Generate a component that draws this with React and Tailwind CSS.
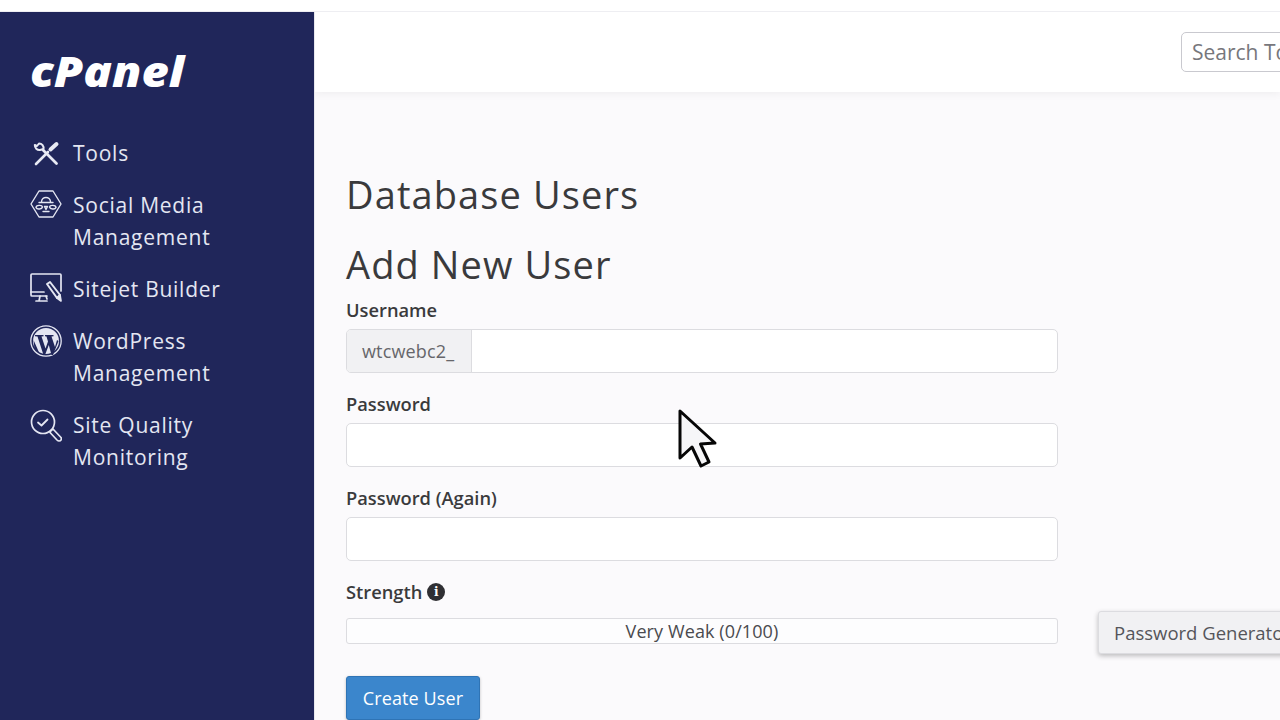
const ToolsIcon = () => (
  <svg width="30" height="30" viewBox="0 0 30 30" fill="none" stroke="#e8eaf4" strokeLinejoin="round" strokeLinecap="round">
    <path d="M6 27 L18 15" strokeWidth="2.600" />
    <path d="M20.500 12.500 L26.500 7" strokeWidth="4" />
    <path d="M13 13 L26.500 26.500" strokeWidth="2.800" />
    <path d="M9 6.500 L7 9 L4.800 8 C4.800 11 7 13.300 10 13 L13.500 12 C14 9 12 6.500 9 6.500 Z" strokeWidth="2" />
  </svg>
);

const SocialIcon = () => (
  <svg width="32" height="30" viewBox="0 0 32 30" fill="none" stroke="#e4e6f2" strokeWidth="1.400" strokeLinejoin="round" strokeLinecap="round">
    <path d="M9 2 H23 L31 15 L23 28 H9 L1 15 Z" />
    <path d="M11.500 13 C11.500 7 20.500 7 20.500 13" />
    <path d="M9 13.500 H23" />
    <path d="M6 18.500 C6 16 12 15.500 12.500 18 C12 20 7 21 6 18.500 Z" />
    <path d="M26 18.500 C26 16 20 15.500 19.500 18 C20 20 25 21 26 18.500 Z" />
    <path d="M14.500 17.500 H17.500 L16 20.500 Z" />
    <path d="M13 22.500 H19" />
  </svg>
);

const SitejetIcon = () => (
  <svg width="32" height="32" viewBox="0 0 32 32" fill="none" stroke="#e4e6f2" strokeWidth="1.700" strokeLinejoin="round" strokeLinecap="round">
    <path d="M17 23 H2 C1.400 23 1 22.600 1 22 V2 C1 1.400 1.400 1 2 1 H30 C30.600 1 31 1.400 31 2 V18" />
    <path d="M1 19 H14" />
    <path d="M10 23 L9 28 M16 23 L17 26 M6 28 H17" />
    <path d="M17 11 L20 9 L30 22 L27 25 Z" strokeWidth="2" />
    <path d="M27 25 L30 22 L31 28 Z" fill="#e4e6f2" />
  </svg>
);

const WordPressIcon = () => (
  <svg width="32" height="32" viewBox="0 0 32 32">
    <circle cx="16" cy="16" r="15.200" fill="none" stroke="#e4e6f2" strokeWidth="1.300" />
    <circle cx="16" cy="16" r="13" fill="#e4e6f2" />
    <path d="M5 10 H13.500 V11.300 L11.500 11.600 L15.500 23.500 L18 16.500 L16.500 11.600 L15 11.300 V10 H23.500 V11.300 L21.500 11.600 L25 22 L27 15 L28.500 16 L23 30 H21.500 L18.800 20 L15 30 H13.500 L7.500 11.600 L5 11.300 Z" fill="#20265a" />
    <path d="M3.500 15 L9.500 28.500 L11 29.500 L4.500 24 Z" fill="#20265a" />
  </svg>
);

const QualityIcon = () => (
  <svg width="32" height="34" viewBox="0 0 32 34" fill="none" stroke="#e4e6f2" strokeWidth="1.700" strokeLinejoin="round" strokeLinecap="round">
    <circle cx="13" cy="13" r="11.500" />
    <path d="M8 13.500 L11.500 16.500 L17.500 10.500" strokeWidth="1.800" />
    <path d="M21 21.500 L23 20 L31 28.500 C32 30 31 32 29 32 C28 32 27.500 31.500 27 31 L20 23.500 Z" />
  </svg>
);

const Cursor = () => (
  <svg width="42" height="62" viewBox="0 0 42 62" className="absolute left-[677px] top-[408px]">
    <path d="M3 3 L3 50 L15 39 L24 58 L32 54 L23.500 36 L38 35 Z" fill="#f6f6f8" stroke="#060606" strokeWidth="3" strokeLinejoin="round" />
  </svg>
);

const Item = ({ icon, children }) => (
  <a className="flex text-[21px] leading-[32px] text-[#e4e6f2] tracking-[0.75px] mb-[20px]">
    <span className="w-[32px] flex-none mr-[11px]">{icon}</span>
    <span>{children}</span>
  </a>
);

const Label = ({ children }) => (
  <label className="block text-[18.300px] leading-[26px] font-[550] text-[#3a3a3c] mb-[6px]">{children}</label>
);

export default function App() {
  return (
    <div className="relative w-[1280px] h-[720px] overflow-hidden flex flex-col bg-white font-['Open_Sans',sans-serif]">
      <div className="h-[12px] flex-none bg-white border-b border-[#eeeef2]" />
      <div className="flex flex-1 min-h-0">
        <aside className="w-[315px] flex-none bg-[#20265a] pl-[30px] border-r border-[#e8e8ee]">
          <div className="h-[125px] pt-[30px]">
            <span className="inline-block origin-left scale-x-[1.1] text-white italic font-extrabold text-[43px] leading-[58px]">cPanel</span>
          </div>
          <Item icon={<ToolsIcon />}>Tools</Item>
          <Item icon={<SocialIcon />}>Social Media<br />Management</Item>
          <Item icon={<SitejetIcon />}>Sitejet Builder</Item>
          <Item icon={<WordPressIcon />}>WordPress<br />Management</Item>
          <Item icon={<QualityIcon />}>Site Quality<br />Monitoring</Item>
        </aside>
        <main className="flex-1 min-w-0 bg-[#fbfafc] overflow-hidden">
          <header className="h-[80px] bg-white shadow-[0_2px_8px_rgba(0,0,0,0.05)] pt-[20px] pl-[866px]">
            <div className="w-[300px] h-[40px] border border-[#c9c9cf] rounded-[5px] bg-white pl-[10px] text-[21px] leading-[38px] text-[#77777c]">Search Tools</div>
          </header>
          <div className="pl-[31px]">
            <h1 className="mt-[78px] text-[38px] leading-[48px] font-normal tracking-[1.100px] text-[#3a3a3c]">Database Users</h1>
            <h2 className="mt-[22px] text-[38px] leading-[48px] font-normal tracking-[1.100px] text-[#3a3a3c] mb-[9px]">Add New User</h2>
            <div className="h-[94px]">
              <Label>Username</Label>
              <div className="flex w-[712px] h-[44px] border border-[#dcdce0] rounded-[5px] bg-white overflow-hidden">
                <span className="w-[125px] bg-[#f1f1f3] border-r border-[#dcdce0] pl-[15px] text-[18px] tracking-[0.15px] leading-[42px] text-[#66666a]">wtcwebc2_</span>
              </div>
            </div>
            <div className="h-[94px]">
              <Label>Password</Label>
              <div className="w-[712px] h-[44px] border border-[#dcdce0] rounded-[5px] bg-white" />
            </div>
            <div className="h-[94px]">
              <Label>Password (Again)</Label>
              <div className="w-[712px] h-[44px] border border-[#dcdce0] rounded-[5px] bg-white" />
            </div>
            <div className="h-[84px]">
              <div className="flex items-center gap-[5px] mb-[13px] h-[26px]">
                <span className="text-[18.300px] leading-[26px] font-[550] text-[#3a3a3c]">Strength</span>
                <span className="w-[18px] h-[18px] rounded-full bg-[#2f2f33] text-white text-[12px] leading-[18px] font-bold text-center font-['DejaVu_Serif',serif]">i</span>
              </div>
              <div className="flex items-start">
                <div className="flex-none w-[712px] h-[26px] border border-[#dcdce0] rounded-[3px] bg-[#fdfdfe] text-center text-[18px] leading-[24px] tracking-[0.1px] text-[#4a4a4e]">Very Weak (0/100)</div>
                <div className="flex-none ml-[40px] -mt-[7px] w-[240px] h-[43px] bg-[#f1f1f3] border border-[#dcdce0] rounded-[3px] shadow-[0_2px_5px_rgba(0,0,0,0.25)] pl-[15px] text-[18.500px] leading-[41px] whitespace-nowrap text-[#55555a]">Password Generator</div>
              </div>
            </div>
            <button className="block mt-[13px] w-[134px] h-[44px] bg-[#3b86cc] border border-[#2f74b5] rounded-[3px] text-white text-[18px] tracking-[0.1px] shadow-[0_1px_3px_rgba(0,0,0,0.25)]">Create User</button>
          </div>
        </main>
      </div>
      <Cursor />
    </div>
  );
}
